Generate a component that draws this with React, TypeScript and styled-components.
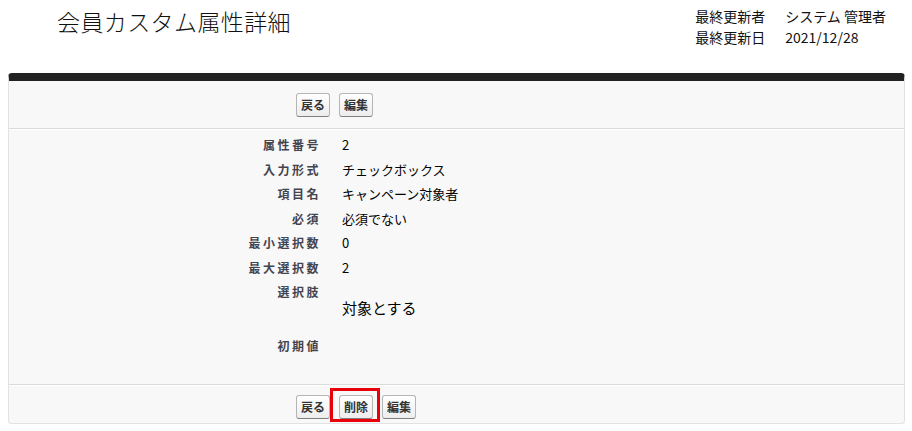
import React from 'react';
import styled, { createGlobalStyle } from 'styled-components';

const GlobalStyle = createGlobalStyle`
  html, body {
    margin: 0;
    padding: 0;
    background: #ffffff;
  }
  body {
    font-family: "Noto Sans CJK JP", "Noto Sans", "Liberation Sans", sans-serif;
    color: #000;
  }
`;

const Page = styled.div`
  width: 912px;
  padding: 0 7px 0 8px;
  box-sizing: border-box;
`;

const Header = styled.div`
  display: flex;
  justify-content: space-between;
  align-items: flex-start;
  height: 73px;
`;

const Title = styled.h1`
  margin: 5px 0 0 49px;
  font-size: 23px;
  font-weight: 300;
  line-height: 32px;
  color: #111;
  letter-spacing: 0.4px;
`;

const Meta = styled.div`
  display: grid;
  grid-template-columns: auto auto;
  column-gap: 20px;
  margin: 6px 19px 0 0;
  font-size: 14px;
  line-height: 21px;
  color: #111;
`;

const Panel = styled.div`
  border-top: 8px solid #222;
  border-left: 1px solid #e0e3e5;
  border-right: 1px solid #e0e3e5;
  border-bottom: 1px solid #e0e3e5;
  border-radius: 4px;
  background: #f8f8f8;
  box-shadow: 0 1px 1px rgba(0, 0, 0, 0.05);
`;

const ButtonRow = styled.div<{ $top: number; $bottom: number }>`
  display: flex;
  gap: 9px;
  padding: ${p => p.$top}px 0 ${p => p.$bottom}px 287px;
`;

const Separator = styled.div`
  border-top: 1px solid #dbdbdb;
  box-shadow: inset 0 1px 0 #ffffff;
  height: 2px;
`;

const Btn = styled.button`
  font-family: "Noto Sans CJK JP", "Noto Sans", sans-serif;
  font-size: 12px;
  font-weight: 700;
  color: #333;
  line-height: 22px;
  padding: 0 4px;
  border: 1px solid #b5b5b5;
  border-bottom-color: #7f7f7f;
  border-radius: 3px;
  background: linear-gradient(#ffffff, #ededed);
  cursor: pointer;
`;

const Highlight = styled.div`
  position: relative;
  display: flex;
  &::after {
    content: '';
    position: absolute;
    left: -9px;
    right: -7px;
    top: -7px;
    bottom: -3px;
    border: 3px solid #e8000b;
    pointer-events: none;
  }
`;

const Details = styled.div`
  display: grid;
  grid-template-columns: 313px 1fr;
  column-gap: 20px;
  padding: 2px 0 25px;
`;

const Label = styled.div<{ $tall?: number }>`
  text-align: right;
  padding-right: 1px;
  font-size: 12px;
  font-weight: 700;
  letter-spacing: 2.5px;
  color: #44444f;
  line-height: 24.5px;
  min-height: ${p => p.$tall ?? 24.5}px;
`;

const Value = styled.div<{ $big?: boolean }>`
  font-size: ${p => (p.$big ? 15 : 13)}px;
  line-height: 24.5px;
  color: #000;
  padding-top: ${p => (p.$big ? 16 : 0)}px;
`;

const rows: { label: string; value: string; big?: boolean; tall?: number }[] = [
  { label: '属性番号', value: '2' },
  { label: '入力形式', value: 'チェックボックス' },
  { label: '項目名', value: 'キャンペーン対象者' },
  { label: '必須', value: '必須でない' },
  { label: '最小選択数', value: '0' },
  { label: '最大選択数', value: '2' },
  { label: '選択肢', value: '対象とする', big: true, tall: 54 },
  { label: '初期値', value: '' },
];

export default function App() {
  return (
    <Page>
      <GlobalStyle />
      <Header>
        <Title>会員カスタム属性詳細</Title>
        <Meta>
          <span>最終更新者</span>
          <span>システム 管理者</span>
          <span>最終更新日</span>
          <span>2021/12/28</span>
        </Meta>
      </Header>
      <Panel>
        <ButtonRow $top={12} $bottom={11}>
          <Btn>戻る</Btn>
          <Btn>編集</Btn>
        </ButtonRow>
        <Separator />
        <Details>
          {rows.map(r => (
            <React.Fragment key={r.label}>
              <Label $tall={r.tall}>{r.label}</Label>
              <Value $big={r.big}>{r.value}</Value>
            </React.Fragment>
          ))}
        </Details>
        <Separator />
        <ButtonRow $top={8} $bottom={4}>
          <Btn>戻る</Btn>
          <Highlight>
            <Btn>削除</Btn>
          </Highlight>
          <Btn>編集</Btn>
        </ButtonRow>
      </Panel>
    </Page>
  );
}
